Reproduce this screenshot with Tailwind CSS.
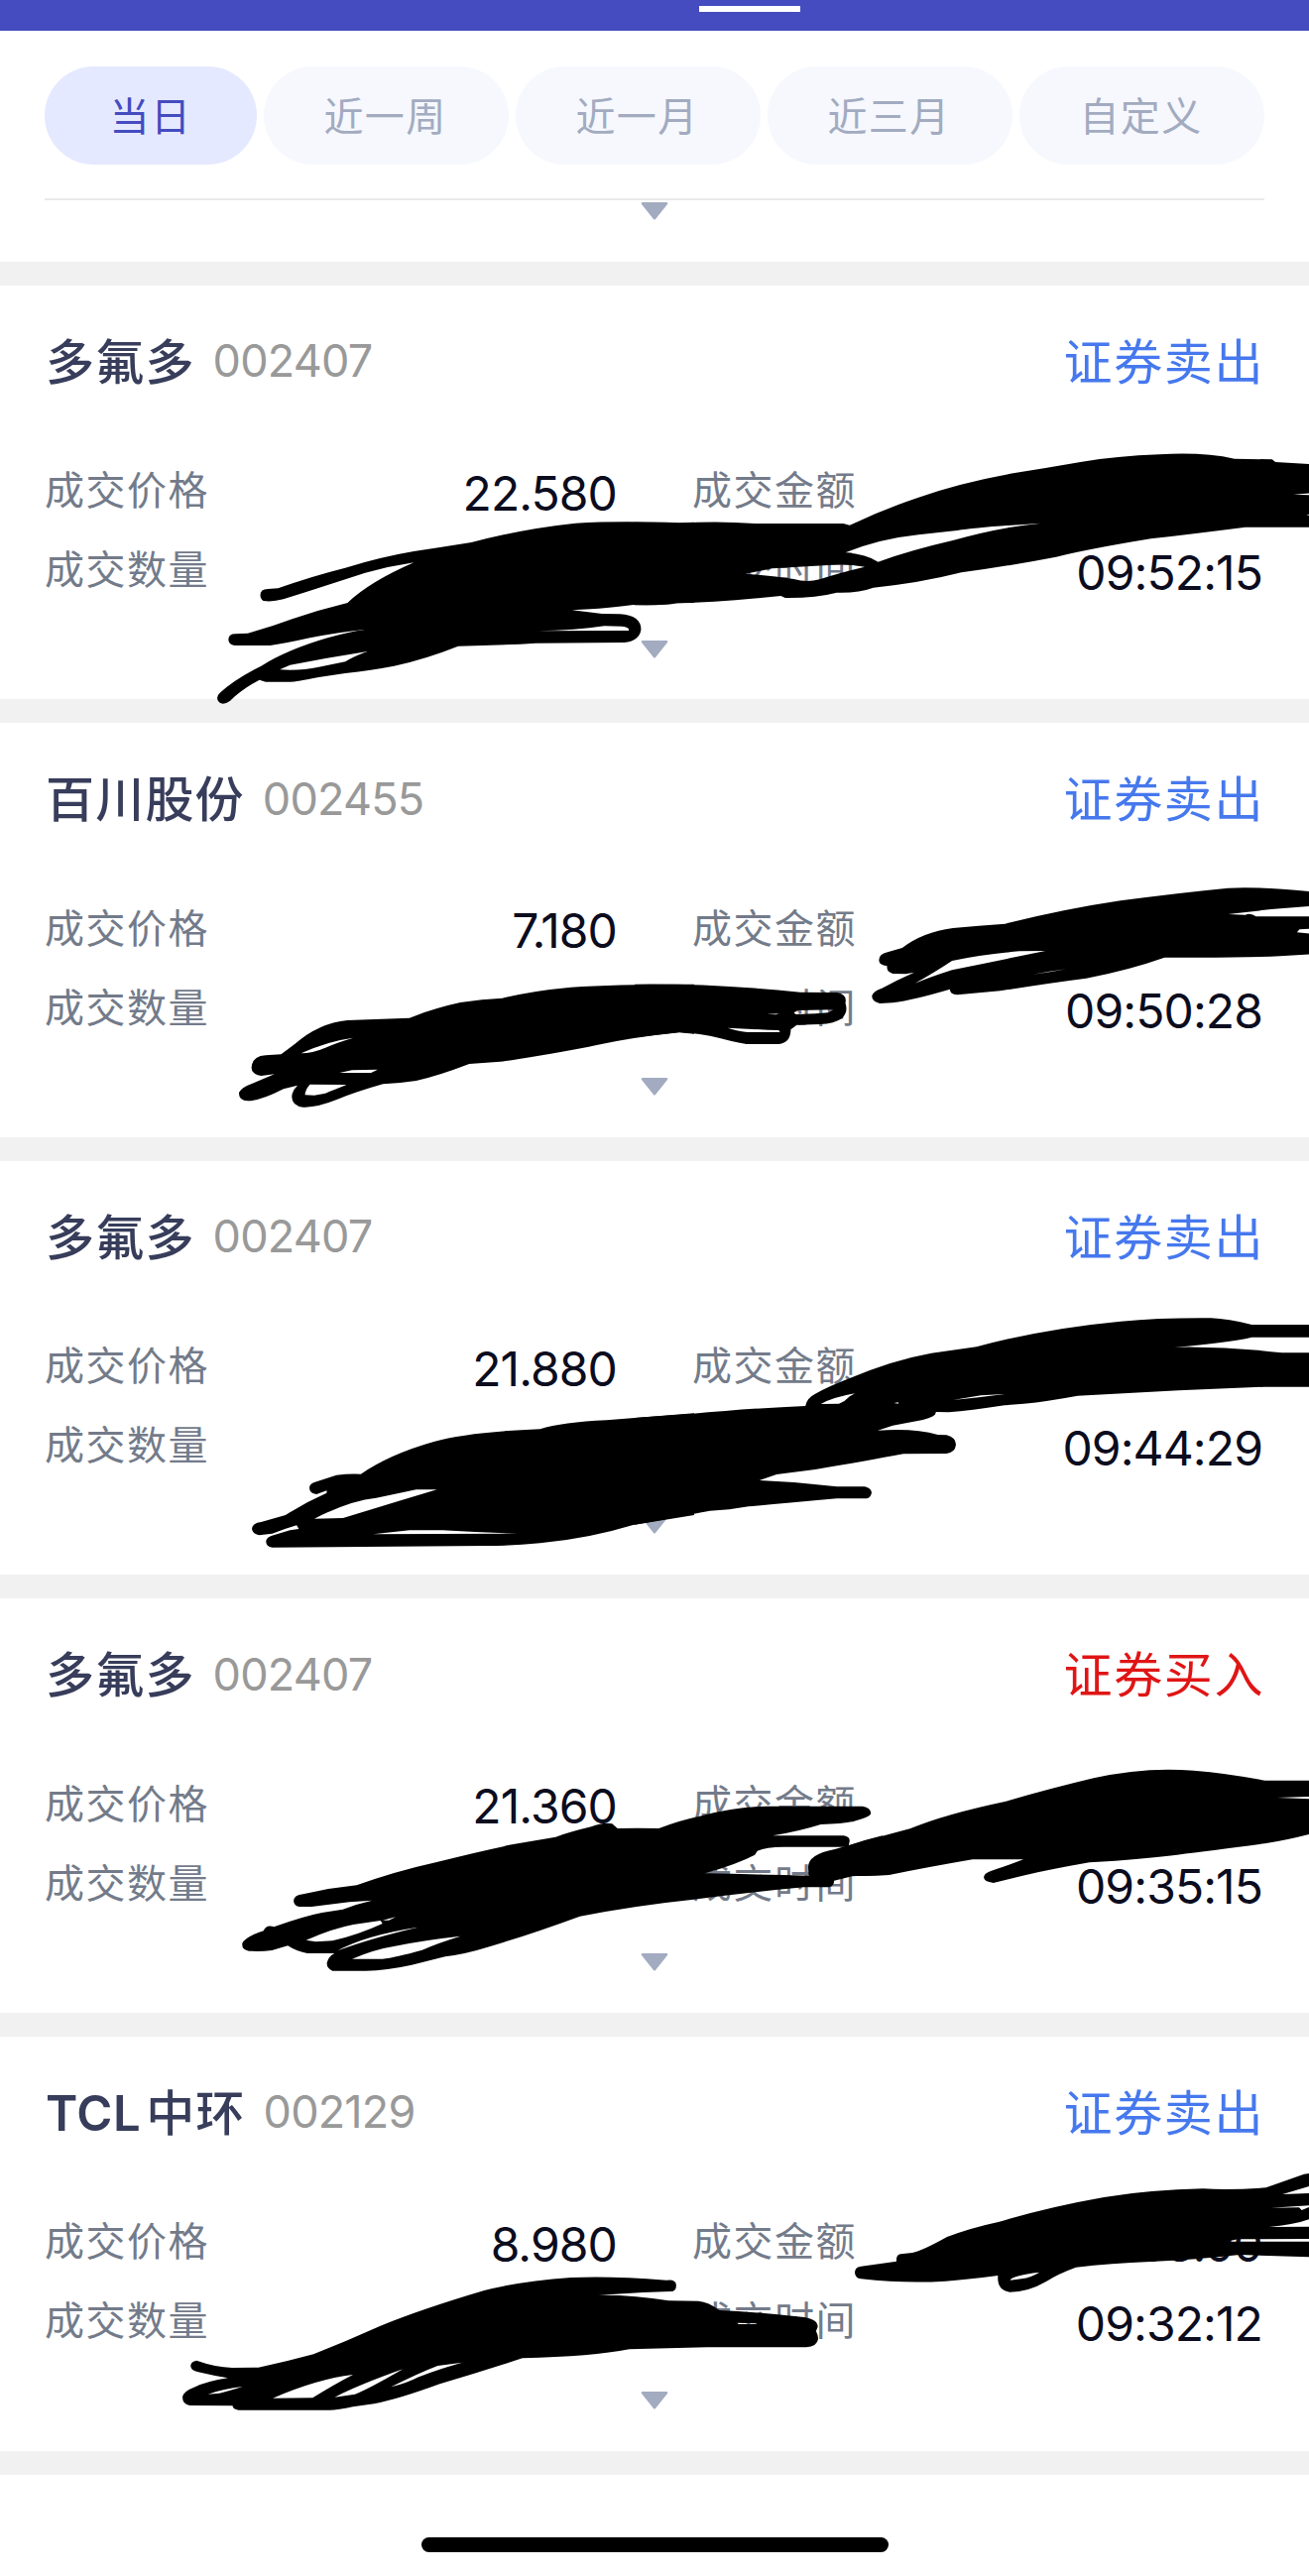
<!DOCTYPE html>
<html lang="zh-CN">
<head>
    <meta charset="UTF-8">
    <meta name="viewport" content="width=device-width, initial-scale=1.0">
    <title>成交查询</title>
    <script src="https://cdn.jsdelivr.net/npm/@tailwindcss/browser@4"></script>
</head>
<body class="relative bg-white w-[1320px] h-[2598px] overflow-hidden font-['Inter','Noto_Sans_CJK_SC',sans-serif]">
    <!-- Top bar -->
    <header class="h-[31px] bg-[#444cbf] pt-[6px] pl-[705px]">
        <div class="w-[102px] h-[6px] bg-white"></div>
    </header>

    <!-- Date range -->
    <section class="h-[233px] px-[45px] pt-[36px]">
        <div class="flex gap-[7px] text-[40px] tracking-[1.4px] leading-none text-[#a2abc0]">
            <button class="w-[214px] h-[99px] pt-[2px] rounded-full bg-[#e5e9ff] text-[#444cbf]">当日</button>
            <button class="flex-1 h-[99px] pt-[2px] pr-[2px] rounded-full bg-[#f6f8fd]">近一周</button>
            <button class="flex-1 h-[99px] pt-[2px] pr-[2px] rounded-full bg-[#f6f8fd]">近一月</button>
            <button class="flex-1 h-[99px] pt-[2px] pr-[2px] rounded-full bg-[#f6f8fd]">近三月</button>
            <button class="flex-1 h-[99px] pt-[2px] pr-[2px] rounded-full bg-[#f6f8fd]">自定义</button>
        </div>
        <div class="mt-[34px] h-[2px] bg-[#e9e9e9]"></div>
        <svg class="mx-auto mt-[2px] w-[28px] h-[18px]" viewBox="0 0 28 18" fill="#a2abc0"><path d="M2 0h24q2 0 1 2L15 17q-1 1-2 0L1 2q-1-2 1-2z"></path></svg>
    </section>
    <div class="h-[23.6px] bg-[#f1f1f1]"></div>

    <!-- Trade list -->
    <main id="trade-list"></main>

    <!-- Home indicator -->
    <div class="mx-auto mt-[63.4px] w-[471px] h-[15px] rounded-full bg-black"></div>

    <!-- Marker strokes over the private values -->
    <svg class="absolute left-0 top-0 w-[1320px] h-[2598px]" viewBox="0 0 1320 2598" fill="#000" fill-rule="evenodd">
        <g transform="translate(0 280) scale(.44643 .33333)">
            <path d="M588,960Q588,942 605,942L628,940Q700,905 780,878Q860,845 935,828Q1000,815 1065,801Q1180,760 1300,743Q1400,735 1535,742L1568,740V984L1530,985Q1500,992 1430,990Q1380,1000 1292,1006L1360,1017L1400,1018Q1448,1022 1448,1065Q1444,1100 1410,1104L1210,1106Q1130,1113 1035,1115Q960,1155 890,1175Q840,1188 780,1197L720,1209Q670,1223 655,1223L600,1223L586,1217Q545,1247 520,1280Q505,1295 495,1285Q485,1270 498,1255Q530,1215 590,1175Q650,1125 740,1090Q790,1070 828,1064Q760,1073 700,1090Q640,1108 610,1113L530,1113Q516,1110 516,1095Q516,1078 532,1078L560,1076Q610,1058 660,1033Q720,1005 785,984Q835,920 935,862Q880,873 825,893Q740,930 640,973Q615,982 595,978Q588,972 588,960ZM1215,1069Q1300,1067 1365,1054L1405,1055Q1423,1058 1420,1068ZM830,1131Q740,1150 655,1172L632,1186Q680,1190 720,1178L780,1162Q800,1145 830,1131Z"></path>
        </g>
        <g transform="translate(640 280) scale(.43367 .33333)">
            <path d="M0,740L105,743Q190,735 280,744L485,744L500,749Q580,700 660,665Q760,620 880,592Q960,575 1040,557Q1120,540 1220,535Q1320,527 1395,548L1482,550L1490,558L1570,564V652L1532,656L1570,658V716L1562,718L1570,720V755L1420,755Q1300,775 1200,790Q1060,820 980,845Q860,875 760,892Q660,925 555,938Q520,955 470,953Q420,970 350,969L340,963Q200,982 95,985Q80,992 0,991ZM490,832Q570,790 660,778L750,765Q800,755 945,743Q850,755 740,795Q640,825 566,860Q540,838 490,832ZM258,896L320,880L460,869Q500,867 535,875Q470,895 430,913Q400,923 370,912Q320,902 258,896Z"></path>
        </g>
        <g transform="translate(0 730) scale(.44643 .33333)">
            <path d="M568,1040Q570,1005 600,1003L635,1000L665,970Q720,905 785,897L925,890Q980,860 1040,843Q1090,833 1135,830Q1200,808 1290,797Q1400,787 1568,788V938L1535,934Q1430,948 1345,973L1330,977Q1200,1010 1130,1022L1060,1029Q990,1065 940,1080Q900,1088 865,1090Q800,1115 765,1135Q715,1162 685,1160Q655,1155 660,1120Q663,1105 672,1094L640,1105Q590,1140 560,1141Q538,1140 540,1115Q545,1100 570,1088L620,1060L590,1065Q568,1060 568,1040ZM680,997Q740,960 798,950Q760,965 735,980Q705,997 680,997ZM767,1056L795,1048L853,1046L838,1056ZM700,1091L783,1092Q750,1110 735,1118L710,1124L689,1123Q689,1108 700,1091Z"></path>
        </g>
        <g transform="translate(640 730) scale(.43367 .33333)">
            <path d="M0,788Q180,785 385,812L470,813Q495,818 490,845Q497,870 483,890Q465,907 430,909L377,911L363,925Q363,965 335,969L260,969Q220,960 200,952Q150,935 103,933L0,949ZM216,920L310,926L335,927L338,933L262,933Q235,928 216,920ZM370,874L380,867L462,865L450,874L420,877L375,879ZM308,878L338,877L328,880Z"></path>
            <path d="M568,715Q568,695 590,690L622,678Q670,630 740,618Q800,610 862,605Q1000,560 1130,535Q1260,512 1380,497Q1450,492 1570,507V552L1480,561L1380,576L1420,578Q1432,570 1445,583L1570,583V620L1546,622L1540,631L1570,635V697L1500,703Q1400,709 1232,707Q1150,745 1050,770Q960,785 850,808L750,820Q733,818 733,803Q650,835 600,844L570,846Q550,840 552,822Q555,808 575,800Q610,775 650,752L630,757L600,756Q585,750 587,733Q568,730 568,715ZM652,785Q700,750 738,717Q810,697 895,688L955,687Q850,715 738,745Q690,765 652,785ZM925,758L965,751L1005,742L965,749Z"></path>
        </g>
        <g transform="translate(0 1300) scale(.44643 .33333)">
            <path d="M569,725Q570,708 590,705L645,684Q690,645 738,617L738,610L715,621Q698,618 699,600Q700,588 715,583L760,563Q790,558 815,560Q880,500 980,462Q1060,432 1220,424Q1270,403 1370,397L1568,376V684L1430,714Q1330,755 1220,769Q1160,777 1100,777L615,782Q600,778 601,762Q603,750 618,745L655,730L675,726L670,715Q640,727 615,740L585,745Q570,740 569,725ZM710,695Q790,640 850,632L940,607L987,607Q880,650 775,693ZM843,742L925,730L1000,730Q1090,737 1170,740Z"></path>
        </g>
        <g transform="translate(640 1300) scale(.43367 .33333)">
            <path d="M0,390L130,378Q280,360 397,354Q400,330 420,317Q450,295 500,270Q600,215 690,194L795,175Q950,120 1130,98Q1220,87 1340,88Q1380,90 1435,108H1570V146H1435Q1380,163 1255,176Q1380,173 1505,193H1570V296H1465L1265,307L1030,323Q960,340 905,347L860,352Q780,368 730,373L700,372Q703,385 670,396L600,413L565,428Q650,420 705,441L725,442Q748,450 747,472Q745,495 725,498L625,499Q540,520 420,546L330,561L290,579Q380,583 470,598H535Q550,602 551,616Q550,630 540,634L470,634Q350,648 265,658L220,667L175,671L90,692L0,713ZM433,348Q460,328 512,316L500,325Q490,340 475,347ZM740,336L805,322L860,318L800,328ZM603,345L613,343V347Z"></path>
        </g>
        <g transform="translate(230 1790) scale(.42092 .33333)">
            <path d="M157,380Q158,364 180,361L240,345L308,334Q400,292 500,264Q600,232 680,211L785,188Q820,172 870,157Q900,142 920,148L933,162Q980,160 1032,162Q1080,138 1130,125Q1210,98 1290,95H1520Q1541,100 1540,118Q1535,130 1500,140Q1470,148 1420,150Q1370,170 1305,184H1475Q1490,188 1489,200L1487,214Q1530,195 1568,184V302L1495,307L1452,320Q1452,335 1440,340L1380,340Q1250,355 1110,378Q980,395 843,428Q720,485 620,522Q570,542 520,550L440,575Q380,592 330,593L250,593Q235,585 237,568Q240,550 255,540L190,540Q165,535 143,517L105,531Q80,535 50,533Q32,528 34,510Q40,490 85,472Q90,455 105,458L110,460Q180,428 225,417L275,407Q310,390 345,380L290,385L200,399L170,399Q157,395 157,380ZM187,500Q250,465 300,453L365,441L370,450Q310,485 250,502L210,505ZM297,557Q350,528 400,518Q470,500 557,488Q500,510 465,530Q400,553 370,557ZM1268,230Q1290,218 1330,218L1478,218Q1400,245 1390,285L1391,305Q1280,302 1142,298Q1220,270 1262,242ZM262,532Q330,485 455,461Q340,495 262,532ZM370,440L402,430L385,440Z"></path>
        </g>
        <g transform="translate(0 1620) scale(.84184 .33333)">
            <path d="M968,790Q968,750 1000,735Q1050,700 1090,673Q1130,630 1205,590Q1260,550 1310,520Q1370,485 1430,497Q1470,505 1515,527L1568,527V576L1530,579L1568,583V690Q1540,708 1515,718Q1450,740 1410,752Q1370,765 1305,775Q1260,795 1225,815L1190,837Q1176,832 1179,815Q1180,805 1200,790L1226,766L1165,766Q1110,790 1065,813Q1040,818 1020,815L972,818Z"></path>
        </g>
        <g transform="translate(170 2280) scale(.4273 .33333)">
            <path d="M52,318Q53,305 66,302Q110,322 150,324L212,323Q280,305 342,283Q420,243 500,197Q600,145 745,90Q830,62 950,51Q1040,45 1175,59Q1198,55 1198,75Q1198,93 1185,93L1120,96L1015,104Q1100,103 1180,121L1250,122Q1275,125 1300,150Q1390,155 1500,171Q1532,178 1532,200L1528,213Q1533,225 1533,237Q1530,260 1505,262L1270,262L1087,268Q1000,290 835,295Q740,335 640,373Q540,420 485,433L435,442Q400,452 380,452L165,452Q152,450 151,439L50,438Q32,435 33,412Q35,395 60,383Q90,365 140,355L110,348L70,337Q52,332 52,318ZM93,404Q130,387 175,381Q140,395 120,401ZM246,416Q350,358 435,345Q390,375 340,415ZM392,413Q450,375 553,328Q470,390 440,404ZM525,382Q590,340 635,318L693,308Q620,335 590,352Q560,372 525,382ZM1342,188L1385,190L1390,192L1345,192Z"></path>
        </g>
        <g transform="translate(840 2180) scale(.33333)">
            <path d="M66,335Q68,318 85,317L192,302Q190,282 205,280L240,276Q270,270 345,228Q420,200 500,183Q650,138 820,108Q960,85 1120,82Q1200,87 1310,79L1425,38L1440,36V75L1360,99L1440,96V133L1325,140L1410,139L1418,147L1440,138V175Q1400,190 1320,198L1440,197V234L1225,235L1190,242L1440,242V289L1230,282Q1100,297 960,303Q840,308 735,320Q680,340 645,363Q590,395 535,395Q495,390 499,345Q400,358 340,362Q220,370 85,355Q66,352 66,335ZM536,359Q540,345 625,335Q600,350 570,355Z"></path>
        </g>
    </svg>

    <script>
        const trades = [
            { name: '多氟多', code: '002407', side: '证券卖出', price: '22.580', amount: '', time: '09:52:15' },
            { name: '百川股份', code: '002455', side: '证券卖出', price: '7.180', amount: '', time: '09:50:28' },
            { name: '多氟多', code: '002407', side: '证券卖出', price: '21.880', amount: '', time: '09:44:29' },
            { name: '多氟多', code: '002407', side: '证券买入', price: '21.360', amount: '', time: '09:35:15' },
            { name: '<span class="mr-[5px] tracking-[0.5px] font-semibold">TCL</span>中环', code: '002129', side: '证券卖出', price: '8.980', amount: '88.00', time: '09:32:12' },
        ];

        // Render trade cards
        document.getElementById('trade-list').innerHTML = trades.map((t) => `
            <article class="h-[441.6px] border-b-[24px] border-[#f1f1f1] pt-[46px] px-[46px]">
                <div class="flex items-center justify-between h-[60px] leading-none">
                    <div class="flex items-center">
                        <h2 class="mt-[3px] text-[49px] tracking-[1.2px] font-medium text-[#373d5a]">${t.name}</h2>
                        <span class="ml-[18px] text-[45px] tracking-[-0.8px] text-[#999999]">${t.code}</span>
                    </div>
                    <span class="mt-[3px] -mr-[1px] text-[49px] tracking-[1.6px] ${t.side === '证券买入' ? 'text-[#e01515]' : 'text-[#4678ee]'}">${t.side}</span>
                </div>
                <div class="mt-[60px] grid grid-cols-[576px_575px] gap-x-[76px] -mr-[2px] text-[48px] tracking-[-0.9px] leading-none text-[#0b0c1e]">
                    <div class="flex items-center justify-between h-[80px]">
                        <span class="mt-[3px] -ml-[1px] text-[40px] tracking-[1.5px] text-[#737b8a]">成交价格</span>
                        <span class="mt-[8px]">${t.price}</span>
                    </div>
                    <div class="flex items-center justify-between h-[80px]">
                        <span class="mt-[3px] text-[40px] tracking-[1.5px] text-[#737b8a]">成交金额</span>
                        <span class="mt-[8px]">${t.amount}</span>
                    </div>
                    <div class="flex items-center justify-between h-[80px]">
                        <span class="mt-[3px] -ml-[1px] text-[40px] tracking-[1.5px] text-[#737b8a]">成交数量</span>
                    </div>
                    <div class="flex items-center justify-between h-[80px]">
                        <span class="mt-[3px] text-[40px] tracking-[1.5px] text-[#737b8a]">成交时间</span>
                        <span class="mt-[9px]">${t.time}</span>
                    </div>
                </div>
                <svg class="mx-auto mt-[32px] w-[28px] h-[18px]" viewBox="0 0 28 18" fill="#a2abc0"><path d="M2 0h24q2 0 1 2L15 17q-1 1-2 0L1 2q-1-2 1-2z"></path></svg>
            </article>`).join('');
    </script>
</body>
</html>
